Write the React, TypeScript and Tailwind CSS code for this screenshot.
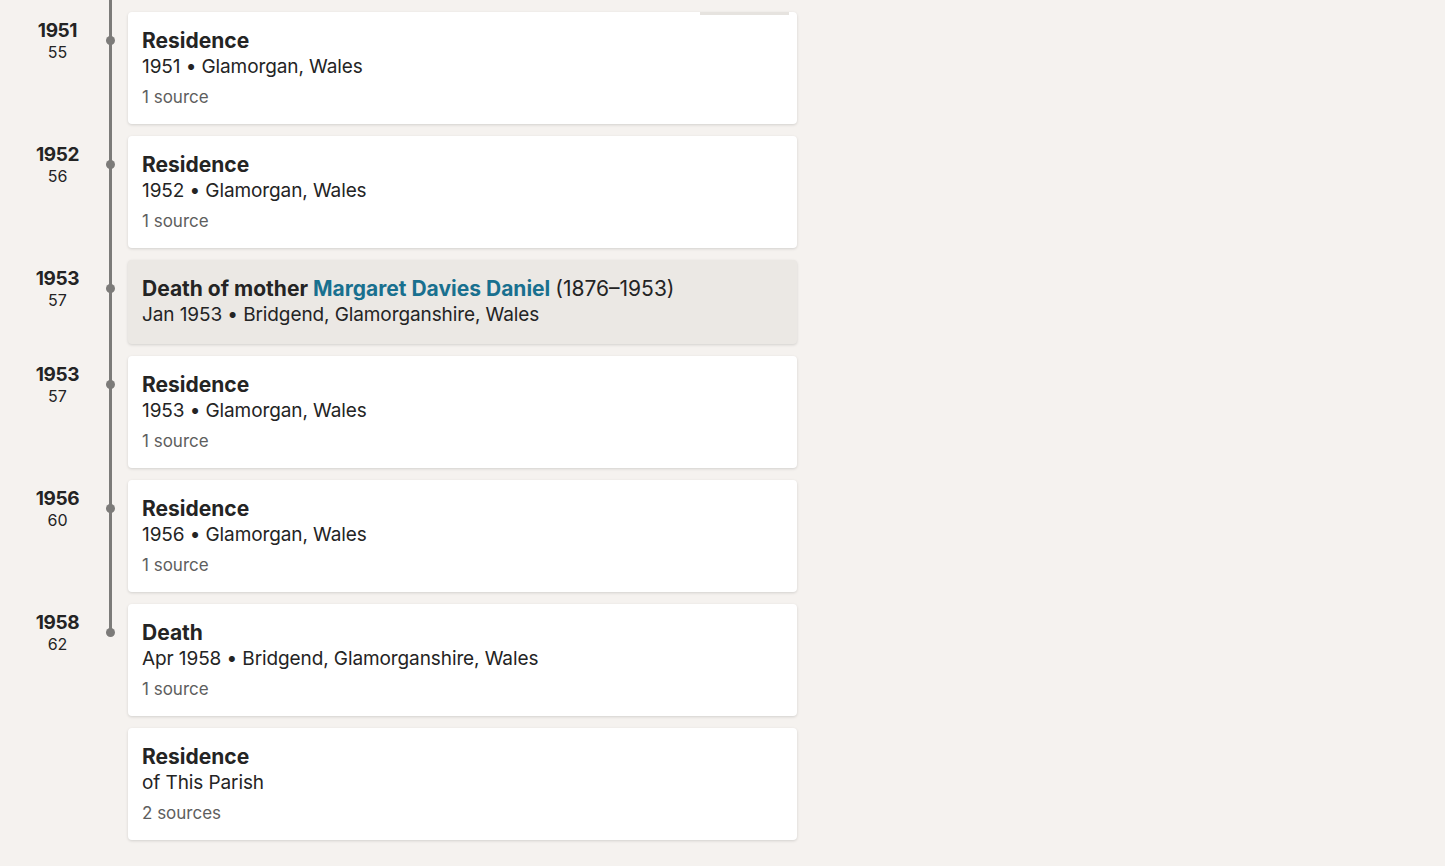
import React from "react";

type Ev = {
  year?: string;
  age?: string;
  title: React.ReactNode;
  detail: React.ReactNode;
  sources?: string;
  highlight?: boolean;
};

const events: Ev[] = [
  { year: "1951", age: "55", title: "Residence", detail: "1951 • Glamorgan, Wales", sources: "1 source" },
  { year: "1952", age: "56", title: "Residence", detail: "1952 • Glamorgan, Wales", sources: "1 source" },
  {
    year: "1953",
    age: "57",
    title: (
      <>
        Death of mother <span className="text-[#19708f]">Margaret Davies Daniel</span>{" "}
        <span className="font-normal">(1876–1953)</span>
      </>
    ),
    detail: "Jan 1953 • Bridgend, Glamorganshire, Wales",
    highlight: true,
  },
  { year: "1953", age: "57", title: "Residence", detail: "1953 • Glamorgan, Wales", sources: "1 source" },
  { year: "1956", age: "60", title: "Residence", detail: "1956 • Glamorgan, Wales", sources: "1 source" },
  { year: "1958", age: "62", title: "Death", detail: "Apr 1958 • Bridgend, Glamorganshire, Wales", sources: "1 source" },
  { title: "Residence", detail: "of This Parish", sources: "2 sources" },
];

export default function App() {
  const lastDated = 5;
  return (
    <div
      className="min-h-[866px] w-full bg-[#f5f2ef] text-[#242424]"
      style={{ fontFamily: "Inter, 'Noto Sans', sans-serif" }}
    >
      <div className="flex flex-col">
        {events.map((e, i) => (
          <div key={i} className="flex pt-3">
            <div className="relative -mt-3 w-[128px] shrink-0">
              {i <= lastDated && (
                <div
                  className={
                    "absolute left-[109px] top-0 w-[3px] bg-[#7c7b79] " +
                    (i === lastDated ? "h-[40px]" : "bottom-0")
                  }
                />
              )}
              {e.year && (
                <>
                  <div className="absolute left-[106px] top-[36px] h-[9px] w-[9px] rounded-full bg-[#7c7b79]" />
                  <div className="flex w-[115px] flex-col items-center pt-[20px]">
                    <div className="text-[19px] font-bold leading-[22px] tracking-[-0.4px]">{e.year}</div>
                    <div className="text-[16px] leading-[20px]">{e.age}</div>
                  </div>
                </>
              )}
            </div>
            <div
              className={
                "relative w-[669px] rounded-[4px] px-[14px] pt-[15px] pb-[16px] shadow-[0_1px_3px_rgba(0,0,0,0.14)] " +
                (e.highlight ? "bg-[#ebe8e4]" : "bg-white")
              }
            >
              {i === 0 && (
                <div className="absolute right-[8px] top-0 h-[3px] w-[89px] bg-[#e6e3df]" />
              )}
              <div className="text-[21px] font-bold leading-[27px]">{e.title}</div>
              <div className="text-[19px] leading-[26px] tracking-[-0.1px]">{e.detail}</div>
              {e.sources && (
                <div className="mt-[6px] text-[17px] leading-[22px] text-[#5e5e5e]">{e.sources}</div>
              )}
            </div>
          </div>
        ))}
      </div>
    </div>
  );
}
